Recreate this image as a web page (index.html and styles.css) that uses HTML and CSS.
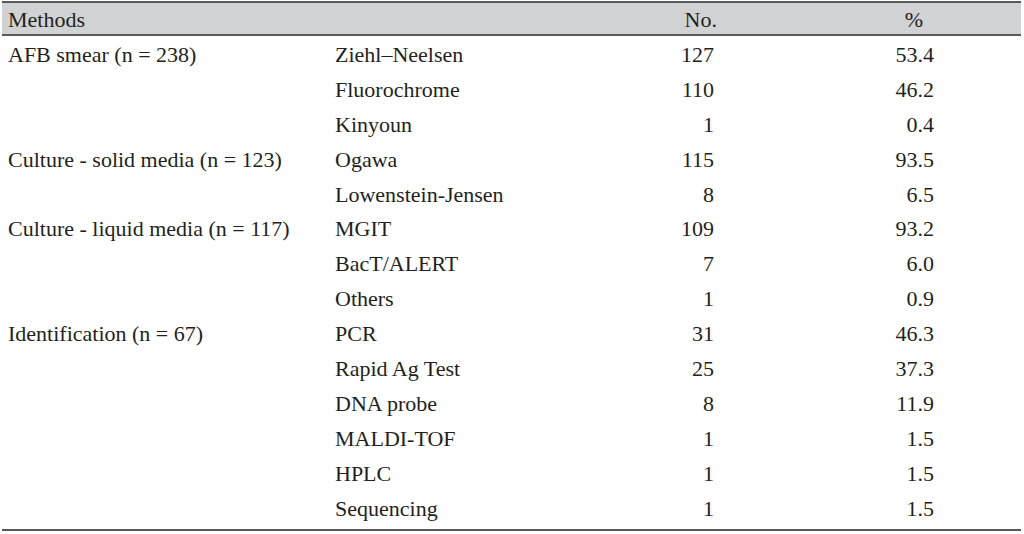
FILE: index.html
```html
<!DOCTYPE html>
<html lang="en">
<head>
<meta charset="utf-8">
<title>Methods</title>
<link rel="stylesheet" href="styles.css">
</head>
<body>
<table class="methods">
  <colgroup>
    <col class="c1">
    <col class="c2">
    <col class="c3">
    <col class="c4">
  </colgroup>
  <thead>
    <tr>
      <th class="cat">Methods</th>
      <th class="sub"></th>
      <th class="num no">No.</th>
      <th class="pct">%</th>
    </tr>
  </thead>
  <tbody>
    <tr><td class="cat">AFB smear (n = 238)</td><td class="sub">Ziehl–Neelsen</td><td class="num">127</td><td class="pc">53.4</td></tr>
    <tr><td class="cat"></td><td class="sub">Fluorochrome</td><td class="num">110</td><td class="pc">46.2</td></tr>
    <tr><td class="cat"></td><td class="sub">Kinyoun</td><td class="num">1</td><td class="pc">0.4</td></tr>
    <tr><td class="cat">Culture - solid media (n = 123)</td><td class="sub">Ogawa</td><td class="num">115</td><td class="pc">93.5</td></tr>
    <tr><td class="cat"></td><td class="sub">Lowenstein-Jensen</td><td class="num">8</td><td class="pc">6.5</td></tr>
    <tr><td class="cat">Culture - liquid media (n = 117)</td><td class="sub">MGIT</td><td class="num">109</td><td class="pc">93.2</td></tr>
    <tr><td class="cat"></td><td class="sub">BacT/ALERT</td><td class="num">7</td><td class="pc">6.0</td></tr>
    <tr><td class="cat"></td><td class="sub">Others</td><td class="num">1</td><td class="pc">0.9</td></tr>
    <tr><td class="cat">Identification (n = 67)</td><td class="sub">PCR</td><td class="num">31</td><td class="pc">46.3</td></tr>
    <tr><td class="cat"></td><td class="sub">Rapid Ag Test</td><td class="num">25</td><td class="pc">37.3</td></tr>
    <tr><td class="cat"></td><td class="sub">DNA probe</td><td class="num">8</td><td class="pc">11.9</td></tr>
    <tr><td class="cat"></td><td class="sub">MALDI-TOF</td><td class="num">1</td><td class="pc">1.5</td></tr>
    <tr><td class="cat"></td><td class="sub">HPLC</td><td class="num">1</td><td class="pc">1.5</td></tr>
    <tr class="last"><td class="cat"></td><td class="sub">Sequencing</td><td class="num">1</td><td class="pc">1.5</td></tr>
  </tbody>
</table>
</body>
</html>
```

FILE: styles.css
```css
html, body {
  margin: 0;
  padding: 0;
  background: #ffffff;
}

body {
  font-family: "Liberation Serif", "Times New Roman", serif;
  font-size: 22px;
  color: #231f20;
}

.methods {
  width: 1019px;
  margin: 1px 0 0 2px;
  border-collapse: separate;
  border-spacing: 0;
  table-layout: fixed;
  border-top: 2px solid #58595b;
  border-bottom: 2px solid #58595b;
}

.c1 { width: 327px; }
.c2 { width: 271px; }
.c3 { width: 120px; }
.c4 { width: 301px; }

.methods th,
.methods td {
  padding: 0;
  font-weight: normal;
  white-space: nowrap;
  line-height: 25px;
  vertical-align: top;
}

.methods thead th {
  background: #d1d2d4;
  height: 33px;
  padding-top: 4px;
  box-sizing: border-box;
  border-bottom: 2px solid #58595b;
}

.methods tbody td {
  height: 34.9px;
  padding-top: 6px;
  box-sizing: border-box;
}

.methods tbody .last td {
  height: 39.3px;
}

.cat {
  text-align: left;
  padding-left: 6px !important;
}

.sub {
  text-align: left;
  padding-left: 6px !important;
}

.num {
  text-align: right;
  padding-right: 6px !important;
}

.num.no {
  padding-right: 3px !important;
}

.pct {
  text-align: right;
  padding-right: 98px !important;
}

.pc {
  text-align: right;
  padding-right: 87px !important;
}
```
